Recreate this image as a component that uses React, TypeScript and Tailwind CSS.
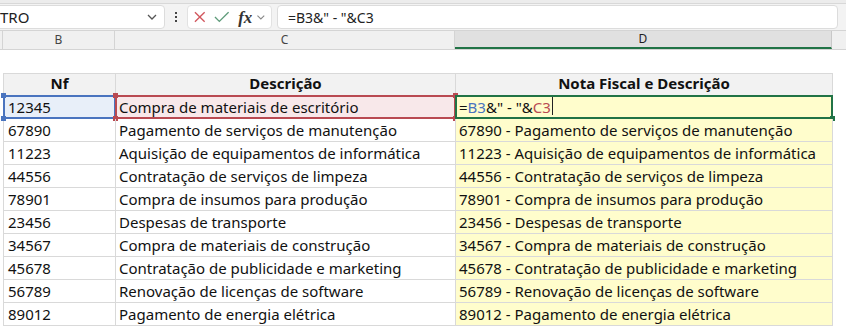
import React from "react";

const rows = [
  ["12345", "Compra de materiais de escritório"],
  ["67890", "Pagamento de serviços de manutenção"],
  ["11223", "Aquisição de equipamentos de informática"],
  ["44556", "Contratação de serviços de limpeza"],
  ["78901", "Compra de insumos para produção"],
  ["23456", "Despesas de transporte"],
  ["34567", "Compra de materiais de construção"],
  ["45678", "Contratação de publicidade e marketing"],
  ["56789", "Renovação de licenças de software"],
  ["89012", "Pagamento de energia elétrica"],
];

const Handle = ({ className }: { className: string }) => (
  <span className={`absolute h-[5px] w-[5px] ${className}`} />
);

const FormulaBar = () => (
  <div className="flex h-[26px] items-center bg-[#f3f3f3] pr-2">
    <div className="-ml-2 flex h-[24px] w-[173px] items-center justify-between rounded-[4px] border border-[#dcdcdc] bg-white pl-2 pr-[5px] text-[15px] text-[#222]">
      <span className="-ml-[1px]">TRO</span>
      <svg width="14" height="14" viewBox="0 0 14 14" className="text-[#555]">
        <path d="M3 5l4 4 4-4" fill="none" stroke="currentColor" strokeWidth="1.3" />
      </svg>
    </div>
    <div className="flex w-[22px] flex-col items-center gap-[2px]">
      <span className="h-[2px] w-[2px] bg-[#444]" />
      <span className="h-[2px] w-[2px] bg-[#444]" />
      <span className="h-[2px] w-[2px] bg-[#444]" />
    </div>
    <div className="flex h-[24px] w-[85px] items-center gap-[7px] rounded-[4px] border border-[#e2e2e2] bg-white px-[5px]">
      <svg width="14" height="14" viewBox="0 0 14 14">
        <path d="M2 2l10 10M12 2L2 12" stroke="#d2585f" strokeWidth="1.4" />
      </svg>
      <svg width="16" height="14" viewBox="0 0 16 14">
        <path d="M1 7l4.5 4.5L15 2" fill="none" stroke="#5e9b7a" strokeWidth="1.4" />
      </svg>
      <span className="ml-[2px] font-['Liberation_Serif',serif] text-[17px] font-bold italic leading-none text-[#333]">
        fx
      </span>
      <svg width="10" height="10" viewBox="0 0 10 10" className="-ml-[3px]">
        <path d="M1.5 3.5L5 7l3.5-3.5" fill="none" stroke="#888" strokeWidth="1.1" />
      </svg>
    </div>
    <div className="ml-[5px] flex h-[24px] flex-1 items-center rounded-[4px] border border-[#dcdcdc] bg-white pl-[10px] text-[14px] text-[#222]">
      =B3&amp;" - "&amp;C3
    </div>
  </div>
);

const ColumnHeaders = () => (
  <div className="flex h-[20px] border-y border-[#d4d4d4] bg-[#f0f0f0] text-[12px] text-[#444]">
    <div className="w-[3px] border-r border-[#d4d4d4]" />
    <div className="flex w-[112px] items-center justify-center border-r border-[#d4d4d4]">B</div>
    <div className="flex w-[340px] items-center justify-center border-r border-[#d4d4d4]">C</div>
    <div className="flex w-[377px] items-center justify-center border-b-2 border-r border-b-[#217346] border-r-[#c8c8c8] bg-[#e0e0e0] text-[#1f1f1f]">
      D
    </div>
    <div className="flex-1" />
  </div>
);

export default function App() {
  return (
    <div className="h-[332px] w-[846px] overflow-hidden bg-white font-['Noto_Sans',sans-serif]">
      <div className="h-[4px] border-b border-[#d8d8d8] bg-[#ececec]" />
      <FormulaBar />
      <ColumnHeaders />
      <div className="h-[23px]" />
      <div className="ml-[3px] w-[830px] text-[15px] leading-none text-[#111]">
        <div className="flex h-[23px] border-y border-l border-[#d9d9d9] bg-[#f2f2f2] font-bold">
          <div className="flex w-[112px] items-end justify-center border-r border-[#d9d9d9] pb-[4px]">Nf</div>
          <div className="flex w-[340px] items-end justify-center border-r border-[#d9d9d9] pb-[4px]">Descrição</div>
          <div className="flex flex-1 items-end justify-center border-r border-[#d9d9d9] pb-[4px]">Nota Fiscal e Descrição</div>
        </div>
        {rows.map(([nf, desc], i) => {
          const first = i === 0;
          return (
            <div key={nf} className="flex h-[23px] border-b border-l border-[#d9d9d9]">
              <div className={`relative flex w-[112px] items-end border-r border-[#d9d9d9] pb-[3px] pl-[4px] ${first ? "bg-[#e8eff9]" : ""}`}>
                {nf}
                {first && (
                  <>
                    <span className="absolute -inset-x-[1px] -inset-y-[1px] border-2 border-[#4a74bf]" />
                    <Handle className="-left-[3px] -top-[3px] bg-[#4a74bf]" />
                    <Handle className="-bottom-[3px] -left-[3px] bg-[#4a74bf]" />
                  </>
                )}
              </div>
              <div className={`relative flex w-[340px] items-end border-r border-[#d9d9d9] pb-[3px] pl-[3px] ${first ? "bg-[#f8e8ea]" : ""}`}>
                {desc}
                {first && (
                  <>
                    <span className="absolute -inset-x-[1px] -inset-y-[1px] border-2 border-[#b94a52]" />
                    <Handle className="-left-[3px] -top-[3px] bg-[#b94a52]" />
                    <Handle className="-bottom-[3px] -left-[3px] bg-[#b94a52]" />
                    <Handle className="-right-[3px] -top-[3px] bg-[#b94a52]" />
                    <Handle className="-bottom-[3px] -right-[3px] bg-[#b94a52]" />
                  </>
                )}
              </div>
              <div className="relative flex flex-1 items-end border-r border-[#d9d9d9] bg-[#fffdcc] pb-[3px] pl-[3px]">
                {first ? (
                  <>
                    <span>=</span>
                    <span className="text-[#4a74bf]">B3</span>
                    <span>&amp;" - "&amp;</span>
                    <span className="text-[#b94a52]">C3</span>
                    <span className="ml-[1px] h-[18px] w-[1px] bg-[#222]" />
                    <span className="absolute -inset-x-[1px] -inset-y-[1px] border-2 border-[#217346]" />
                    <Handle className="-bottom-[3px] -right-[3px] bg-[#217346]" />
                  </>
                ) : (
                  `${nf} - ${desc}`
                )}
              </div>
            </div>
          );
        })}
      </div>
    </div>
  );
}
